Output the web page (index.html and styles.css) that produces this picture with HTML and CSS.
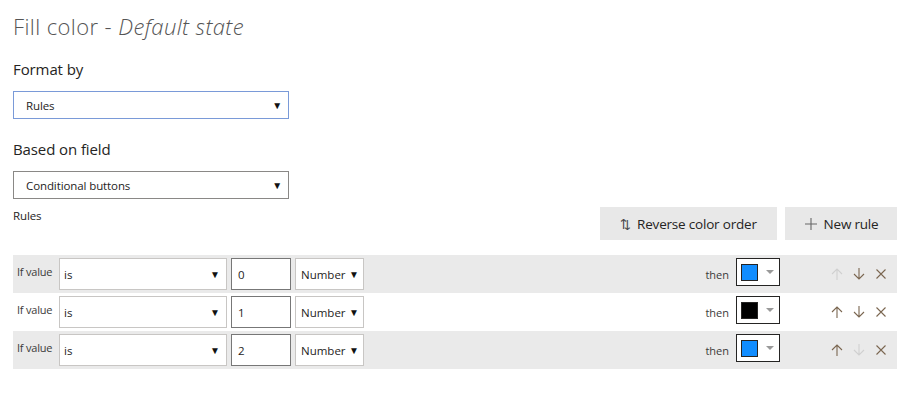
FILE: index.html
```html
<!DOCTYPE html>
<html lang="en">
<head>
    <meta charset="UTF-8">
    <title>Fill color - Default state</title>
    <link rel="stylesheet" href="styles.css">
</head>
<body>
    <div class="panel">
        <h1 class="title">Fill color - <em>Default state</em></h1>

        <div class="field">
            <div class="field-label">Format by</div>
            <div class="dropdown dropdown-focus">
                <span>Rules</span>
                <span class="caret">&#9660;</span>
            </div>
        </div>

        <div class="field">
            <div class="field-label">Based on field</div>
            <div class="dropdown">
                <span>Conditional buttons</span>
                <span class="caret">&#9660;</span>
            </div>
        </div>

        <div class="rules-head">
            <div class="rules-title">Rules</div>
            <div class="rules-actions">
                <button class="btn"><span class="btn-icon">&#8645;</span>Reverse color order</button>
                <button class="btn btn-new">
                    <svg width="14" height="14" viewBox="0 0 14 14"><path d="M7 1v12M1 7h12" stroke="#666" stroke-width="1.1" fill="none"/></svg>
                    New rule
                </button>
            </div>
        </div>

        <ul class="rules">
            <li class="rule shaded">
                <span class="if-label">If value</span>
                <div class="ctl ctl-op"><span>is</span><span class="caret">&#9660;</span></div>
                <div class="ctl ctl-value">0</div>
                <div class="ctl ctl-type"><span>Number</span><span class="caret">&#9660;</span></div>
                <span class="then">then</span>
                <div class="color-pick"><span class="swatch blue"></span><span class="pick-caret"></span></div>
                <div class="rule-icons">
                    <svg class="off" width="12" height="12" viewBox="0 0 12 12"><path d="M6 12V1M1 6l5-5 5 5" /></svg>
                    <svg width="12" height="12" viewBox="0 0 12 12"><path d="M6 0v11M1 6l5 5 5-5" /></svg>
                    <svg width="12" height="12" viewBox="0 0 12 12"><path d="M1.5 1.5l9 9M10.5 1.5l-9 9" /></svg>
                </div>
            </li>
            <li class="rule">
                <span class="if-label">If value</span>
                <div class="ctl ctl-op"><span>is</span><span class="caret">&#9660;</span></div>
                <div class="ctl ctl-value">1</div>
                <div class="ctl ctl-type"><span>Number</span><span class="caret">&#9660;</span></div>
                <span class="then">then</span>
                <div class="color-pick"><span class="swatch black"></span><span class="pick-caret"></span></div>
                <div class="rule-icons">
                    <svg width="12" height="12" viewBox="0 0 12 12"><path d="M6 12V1M1 6l5-5 5 5" /></svg>
                    <svg width="12" height="12" viewBox="0 0 12 12"><path d="M6 0v11M1 6l5 5 5-5" /></svg>
                    <svg width="12" height="12" viewBox="0 0 12 12"><path d="M1.5 1.5l9 9M10.5 1.5l-9 9" /></svg>
                </div>
            </li>
            <li class="rule shaded">
                <span class="if-label">If value</span>
                <div class="ctl ctl-op"><span>is</span><span class="caret">&#9660;</span></div>
                <div class="ctl ctl-value">2</div>
                <div class="ctl ctl-type"><span>Number</span><span class="caret">&#9660;</span></div>
                <span class="then">then</span>
                <div class="color-pick"><span class="swatch blue"></span><span class="pick-caret"></span></div>
                <div class="rule-icons">
                    <svg width="12" height="12" viewBox="0 0 12 12"><path d="M6 12V1M1 6l5-5 5 5" /></svg>
                    <svg class="off" width="12" height="12" viewBox="0 0 12 12"><path d="M6 0v11M1 6l5 5 5-5" /></svg>
                    <svg width="12" height="12" viewBox="0 0 12 12"><path d="M1.5 1.5l9 9M10.5 1.5l-9 9" /></svg>
                </div>
            </li>
        </ul>
    </div>
</body>
</html>
```

FILE: styles.css
```css
* {
    box-sizing: border-box;
}

body {
    margin: 0;
    background: #fff;
    font-family: "Open Sans", "Noto Sans", sans-serif;
    color: #252423;
}

ul {
    list-style: none;
    margin: 0;
    padding: 0;
}

.panel {
    width: 909px;
    padding: 10px 12px 0 13px;
}

.title {
    margin: 0;
    font-size: 22px;
    line-height: 32px;
    font-weight: 300;
    color: #555;
    letter-spacing: 0.4px;
}

.title em {
    font-style: italic;
}

.field {
    margin-top: 16px;
}

.field + .field {
    margin-top: 19px;
}

.field-label {
    font-size: 15px;
    line-height: 22px;
    margin-bottom: 11px;
    letter-spacing: -0.1px;
}

.dropdown {
    width: 276px;
    height: 28px;
    border: 1px solid #8a8886;
    display: flex;
    align-items: center;
    justify-content: space-between;
    padding: 0 6px 0 12px;
    font-size: 11.5px;
    letter-spacing: -0.1px;
}

.dropdown-focus {
    border-color: #7a9ad8;
}

.caret {
    font-size: 10px;
    color: #111;
}

.rules-head {
    display: flex;
    justify-content: space-between;
    align-items: flex-start;
    margin-top: 8px;
}

.rules-title {
    font-size: 11.5px;
    line-height: 18px;
    letter-spacing: -0.1px;
}

.rules-actions {
    display: flex;
    gap: 8px;
}

.btn {
    height: 33px;
    border: 0;
    background: #e8e8e8;
    font-family: inherit;
    font-size: 13.5px;
    color: #252423;
    display: flex;
    align-items: center;
    gap: 6px;
    letter-spacing: -0.2px;
}

.btn:first-child {
    width: 177px;
    justify-content: center;
}

.btn-new {
    width: 112px;
    justify-content: center;
}

.btn-icon {
    font-size: 13px;
    color: #444;
}

.rules {
    margin-top: 15px;
}

.rule {
    height: 38px;
    display: flex;
    align-items: center;
    padding: 0 4px;
}

.rule.shaded {
    background: #eaeaea;
}

.if-label {
    font-size: 11px;
    width: 42px;
    align-self: flex-start;
    padding-top: 9px;
    color: #3b3a39;
    letter-spacing: -0.2px;
}

.ctl {
    height: 32px;
    background: #fff;
    border: 1px solid #c8c6c4;
    display: flex;
    align-items: center;
    font-size: 11.5px;
    margin-right: 4px;
}

.ctl-op {
    width: 168px;
    justify-content: space-between;
    padding: 0 6px 0 4px;
}

.ctl-value {
    width: 60px;
    border-color: #777;
    padding-left: 6px;
}

.ctl-type {
    width: 69px;
    justify-content: space-between;
    padding: 0 4px 0 5px;
}

.then {
    margin-left: auto;
    font-size: 11px;
    color: #3b3a39;
    margin-right: 7px;
}

.color-pick {
    width: 44px;
    height: 28px;
    border: 1px solid #252423;
    background: #fff;
    display: flex;
    align-items: center;
    padding-left: 4px;
    gap: 8px;
    margin-right: 51px;
    margin-top: -4px;
}

.swatch {
    width: 17px;
    height: 17px;
    border: 1px solid #252423;
}

.swatch.blue {
    background: #118dff;
}

.swatch.black {
    background: #000;
}

.pick-caret {
    width: 0;
    height: 0;
    border-left: 4px solid transparent;
    border-right: 4px solid transparent;
    border-top: 4px solid #999;
}

.rule-icons {
    display: flex;
    gap: 10px;
    padding-right: 6px;
}

.rule-icons svg path {
    stroke: #7a6650;
    stroke-width: 1.1;
    fill: none;
}

.rule-icons svg.off path {
    stroke: #d0d0d0;
}
```
